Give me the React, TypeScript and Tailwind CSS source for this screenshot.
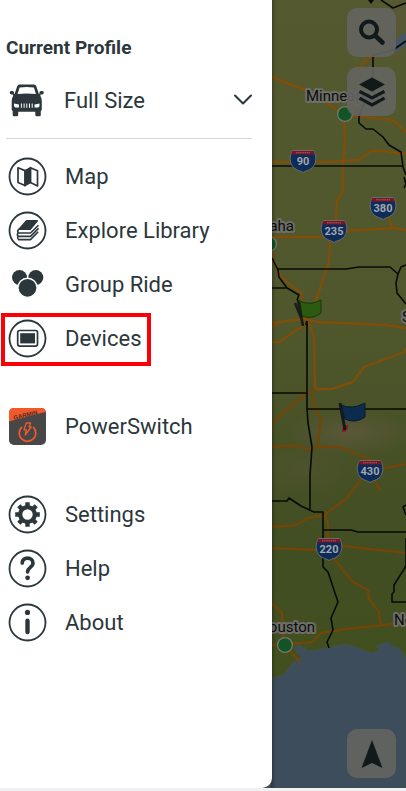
import { ReactNode } from 'react';

type Point = { x: number; y: number };

// Roads and state borders of the map, in map units
const roads = [
  'M272 76 276 79 306 90 344 114 353 116 393 120 406 132',
  'M272 162H328L359 160 371 151H384L401 154 406 153',
  'M344 114 345 143 343 160V191L337 200 336 222 330 242 329 262 316 300 308 322',
  'M344 114 355 100 356 77 363 62 373 56',
  'M388 212 389 217 392 228',
  'M272 237H321L346 231 393 228 406 230',
  'M277 240 272 246 273 260 281 277 301 293 303 310 307 322',
  'M272 323 303 319 319 322 386 325 406 328',
  'M272 328 276 323M272 342H279L306 324',
  'M309 323 314 337 315 389H332L353 382 364 367 404 352 406 348',
];

const southRoads = [
  'M272 423 306 393 315 389M312 393 314 407 321 418 318 445',
  'M272 447 296 445 306 449 318 447H339L370 459V471L406 464',
  'M374 478 376 484 381 490M364 476 346 499 324 515 308 518 296 525 272 527',
  'M324 515 328 523V545M272 548 316 550 343 546 406 553',
  'M332 556 343 570 353 582 368 590 369 599 379 612 381 626',
  'M272 603 282 613V628L285 645 300 662',
  'M272 645 313 642 321 633 346 629 393 624',
];

const borders = [
  'M381 0 393 8 406 3M406 41 393 50 373 55V80L359 117V123L366 129H373L383 137 389 145 401 152 403 167 406 175',
  'M272 166H403M404 177 406 184 404 188',
  'M278 269H346L359 267H390L398 274 396 283 397 293 406 304M398 274 401 267 406 265',
  'M272 258 278 270 279 277 287 288 299 295 297 300M272 288H287',
  'M307 323V409L308 423 312 447 310 475V509',
  'M272 393H307M307 409H406',
  'M272 501H287L289 498 301 506 314 512H323V567L328 572 338 602 331 618 333 630 327 642 329 648',
  'M323 530H351L358 532H406M406 505 403 507 406 515M406 538V566L394 585V592L392 594V602H406',
];

const cities = [
  { name: 'Minneapolis', x: 306, y: 101, anchor: 'start' },
  { name: 'Omaha', x: 294, y: 231, anchor: 'end' },
  { name: 'Houston', x: 315, y: 632, anchor: 'end' },
  { name: 'New Orleans', x: 394, y: 625, anchor: 'start' },
  { name: 'St. Louis', x: 402, y: 322, anchor: 'start' },
] as const;

const cityDots = [
  { x: 345, y: 114 },
  { x: 269, y: 244 },
  { x: 285, y: 645 },
];

const interstates = [
  { label: '90', x: 303, y: 161 },
  { label: '380', x: 383, y: 208 },
  { label: '235', x: 334, y: 231 },
  { label: '430', x: 370, y: 471 },
  { label: '220', x: 329, y: 549 },
];

const Shield = ({ label, x, y }: Point & { label: string }) => (
  <g transform={`translate(${x} ${y})`}>
    <path d="M-10.5-10.5H10.5C14-5 13.5 3 9 7 6 9.5 3 9.5 0 11.5-3 9.5-6 9.5-9 7-13.5 3-14-5-10.5-10.5Z" fill="#0d2c5a" stroke="#6a6c6c" strokeWidth="1" />
    <path d="M-10.3-10H10.3L11.8-6.5H-11.8Z" fill="#7c1422" />
    <path d="M-7-8.2H7" stroke="#a5616a" strokeDasharray="1.5 .6" />
    <text y="4" textAnchor="middle" fill="#a2a8ad" className="font-['Roboto',sans-serif] text-[11px] font-bold">
      {label}
    </text>
  </g>
);

const MapCanvas = () => (
  <svg className="absolute inset-0 h-full w-full" viewBox="0 0 406 788" preserveAspectRatio="xMaxYMin slice" role="img" aria-label="Map">
    <defs>
      <linearGradient id="land" x1="0" y1="0" x2="0" y2="1">
        <stop offset="0" stopColor="#54592f" />
        <stop offset=".4" stopColor="#50572d" />
        <stop offset=".6" stopColor="#455025" />
        <stop offset=".72" stopColor="#414e22" />
        <stop offset=".85" stopColor="#42501f" />
      </linearGradient>
      <radialGradient id="hills">
        <stop offset="0" stopColor="#5b573a" />
        <stop offset="1" stopColor="#5b573a" stopOpacity="0" />
      </radialGradient>
      <linearGradient id="edge" x1="0" x2="1">
        <stop offset="0" stopColor="#000" stopOpacity=".3" />
        <stop offset="1" stopColor="#000" stopOpacity="0" />
      </linearGradient>
    </defs>
    <rect width="406" height="788" fill="url(#land)" />
    <ellipse cx="350" cy="433" rx="62" ry="24" fill="url(#hills)" />
    <ellipse cx="305" cy="470" rx="50" ry="26" fill="url(#hills)" opacity=".4" />
    <ellipse cx="400" cy="20" rx="30" ry="40" fill="url(#hills)" opacity=".7" />

    {/* Water */}
    <path d="M406 32 397 40 388 49 373 57 396 52 406 45Z" fill="#46566a" />
    <path
      d="M0 678H272L283 675 290 666 296 660 302 656 297 654 295 648 299 644 303 648 306 647 305 651 316 650 329 647 346 644 356 647 371 653 380 650 376 646 384 643 389 642 392 646 399 648 403 653 406 658V788H0Z"
      fill="#3e4d5b"
      stroke="#40543f"
      strokeWidth=".8"
    />

    <g fill="none" strokeWidth="2.4" strokeLinejoin="round">
      {roads.map((d) => (
        <path key={d} d={d} stroke="#7f4e09" />
      ))}
      {southRoads.map((d) => (
        <path key={d} d={d} stroke="#724508" />
      ))}
    </g>
    <g fill="none" stroke="#080a06" strokeWidth="1.6" strokeLinejoin="round">
      {borders.map((d) => (
        <path key={d} d={d} />
      ))}
    </g>
    <path d="M368 0H374L371 4Z" fill="#080a06" />

    {cities.map(({ name, x, y, anchor }) => (
      <text
        key={name}
        x={x}
        y={y}
        textAnchor={anchor}
        fill="#0c0d0c"
        stroke="#6d6e68"
        strokeWidth="4"
        strokeLinejoin="round"
        paintOrder="stroke"
        className="font-['Roboto',sans-serif] text-[15px]"
      >
        {name}
      </text>
    ))}
    {cityDots.map(({ x, y }) => (
      <circle key={y} cx={x} cy={y} r="7.4" fill="#135426" stroke="#74776e" strokeWidth="1.3" />
    ))}
    {interstates.map((road) => (
      <Shield key={road.label} {...road} />
    ))}

    {/* Waypoint flags */}
    <path d="M300 301Q309 306 321 300V313Q312 320 302 316Z" fill="#2b5a10" stroke="#193807" strokeWidth="1" />
    <path d="M298 300 303 326M295 303 302 320" stroke="#191c1a" strokeWidth="2.6" />
    <path d="M307 321 306 325" stroke="#080a06" strokeWidth="2" />
    <path d="M341 405Q352 410 365 403V417Q355 424 345 419Z" fill="#0c2b4d" stroke="#071b31" strokeWidth="1" />
    <path d="M342 430H346M345 427 348 427" stroke="#8d1521" strokeWidth="3.5" />
    <path d="M340 403 345 430" stroke="#14191c" strokeWidth="3" />
    <rect x="271" width="5" height="788" fill="url(#edge)" />
  </svg>
);

const MapButton = ({ label, children }: { label: string; children: ReactNode }) => (
  <button type="button" aria-label={label} className="flex h-[49px] w-[49px] items-center justify-center rounded-[10px] bg-[#646561]/90 text-[#11191b]">
    {children}
  </button>
);

// Menu glyphs share a 39 unit box, most of them with a ring around
const Glyph = ({ ring = true, children }: { ring?: boolean; children: ReactNode }) => (
  <svg className="h-[39px] w-[39px] shrink-0" viewBox="0 0 39 39" fill="none" stroke="currentColor" aria-hidden="true">
    {ring && <circle cx="19.5" cy="19.5" r="18" strokeWidth="1.8" />}
    {children}
  </svg>
);

const CarIcon = () => (
  <Glyph ring={false}>
    <path
      fill="currentColor"
      stroke="none"
      fillRule="evenodd"
      d="M12.5 3.6H27Q28.7 3.6 29.3 5.3L31.9 13H32.4V11.7Q32.6 10 34 10H35.3Q36.8 10 36.8 11.6 36.8 13.4 35.3 13.4H33.4V15Q34.8 17 34.8 20V28.8L33.8 30V34Q33.8 35.3 32.6 35.3H29.6Q28.3 35.3 28.3 34V30.7H11.2V34Q11.2 35.3 9.9 35.3H7Q5.7 35.3 5.7 34V30L4.7 28.8V20Q4.7 17 6.1 15V13.4H4.2Q2.7 13.4 2.7 11.6 2.7 10 4.2 10H5.5Q6.9 10 7.1 11.7V13H7.6L10.2 5.3Q10.8 3.6 12.5 3.6ZM12.6 6.4 10.6 13Q19.5 11.9 28.9 13L26.9 6.4Q19.5 5.8 12.6 6.4Z"
    />
    <path d="M7 22.5 12 23.6V26.4H8.3Q7 26 7 24.8ZM32.5 22.5 27.5 23.6V26.4H31.2Q32.5 26 32.5 24.8Z" fill="white" stroke="none" />
    <path d="M14.4 22.5V26.8M17.1 22.5V26.8M19.8 22.5V26.8M22.5 22.5V26.8M25.2 22.5V26.8" stroke="white" strokeWidth="1" />
  </Glyph>
);

const MapIcon = () => (
  <Glyph>
    <path d="M10 10.8 17 13.6V28.6L10 25.4ZM22.5 10.8 29.5 13.8V29L22.5 25.6Z" strokeWidth="1.7" strokeLinejoin="round" />
    <path d="M17 13.6 22.5 10.5V25.6L17 28.8Z" fill="currentColor" strokeWidth="1.2" />
  </Glyph>
);

const LibraryIcon = () => (
  <Glyph>
    <path d="M18.5 9.8H29.3L22.3 18.2H11Z" fill="currentColor" strokeWidth="1.4" strokeLinejoin="round" />
    <path d="M11 18.2Q8.8 20 10.3 22H22.5L30.5 14.2" strokeWidth="1.6" strokeLinejoin="round" />
    <path d="M10 22Q8.6 24 10.3 25.4H22.5L30.5 17.4" strokeWidth="1.6" strokeLinejoin="round" />
    <path d="M9.8 25.4Q9 27.4 10.6 28.6H22.5L30.2 20.8" strokeWidth="1.6" strokeLinejoin="round" />
  </Glyph>
);

const GroupIcon = () => (
  <Glyph ring={false}>
    <g fill="currentColor" stroke="none">
      <circle cx="11.5" cy="12.5" r="7.5" />
      <circle cx="27.8" cy="12.5" r="7.5" />
    </g>
    <circle cx="19.5" cy="22.8" r="9.6" fill="currentColor" stroke="white" strokeWidth="1.4" />
  </Glyph>
);

const DevicesIcon = () => (
  <Glyph>
    <rect x="9.7" y="11.5" width="19.8" height="15.6" rx="2" strokeWidth="1.7" />
    <rect x="12.2" y="14.2" width="14.8" height="10.2" fill="currentColor" stroke="none" />
  </Glyph>
);

const PowerSwitchIcon = () => (
  <Glyph ring={false}>
    <rect x="1" y="1" width="37" height="37" rx="5" fill="#474747" stroke="none" />
    <path d="M1 14.5V6Q1 1 6 1H33Q38 1 38 6V4.8Z" fill="#f1592a" stroke="none" />
    <text x="6" y="13" transform="rotate(-14 6 13)" fill="#4a3029" stroke="none" className="font-['Liberation_Sans',sans-serif] text-[6px] font-bold">
      GARMIN
    </text>
    <path d="M13.5 20.3A8.3 8.3 0 1 0 25.5 20.3" stroke="#f1592a" strokeWidth="1.7" strokeLinecap="round" />
    <path d="M18.3 16H22.6L21.2 20H23.2L17.2 28 18.4 22.8H16Z" stroke="#f1592a" strokeWidth="1.3" strokeLinejoin="round" />
  </Glyph>
);

const SettingsIcon = () => (
  <Glyph>
    {[0, 45, 90, 135].map((angle) => (
      <path key={angle} d="M19.5 7.2V13M19.5 26V31.8" strokeWidth="4.4" transform={`rotate(${angle} 19.5 19.5)`} />
    ))}
    <circle cx="19.5" cy="19.5" r="7.3" strokeWidth="4.2" />
  </Glyph>
);

const HelpIcon = () => (
  <Glyph>
    <path d="M14.2 14C14.2 7.4 25 7.6 25 14.2 25 18.5 19.6 18.3 19.6 22.8" strokeWidth="3.7" strokeLinecap="round" />
    <circle cx="19.6" cy="28.8" r="2.4" fill="currentColor" stroke="none" />
  </Glyph>
);

const AboutIcon = () => (
  <Glyph>
    <circle cx="19.5" cy="9.4" r="2.6" fill="currentColor" stroke="none" />
    <path d="M19.5 17.8V29" strokeWidth="4.4" strokeLinecap="round" />
  </Glyph>
);

const menuGroups = [
  [
    { label: 'Map', icon: <MapIcon /> },
    { label: 'Explore Library', icon: <LibraryIcon /> },
    { label: 'Group Ride', icon: <GroupIcon /> },
    { label: 'Devices', icon: <DevicesIcon />, highlighted: true },
  ],
  [{ label: 'PowerSwitch', icon: <PowerSwitchIcon /> }],
  [
    { label: 'Settings', icon: <SettingsIcon /> },
    { label: 'Help', icon: <HelpIcon /> },
    { label: 'About', icon: <AboutIcon /> },
  ],
];

const Drawer = () => (
  <aside className="relative w-[67%] rounded-br-[10px] bg-white pt-9 text-[#2b373b]">
    <h2 className="px-[6px] text-[19px] leading-6 font-bold">Current Profile</h2>

    {/* Profile picker */}
    <div className="mr-5 ml-[6px] border-b border-[#d6d8d8] pt-[13px] pb-[11px]">
      <button type="button" aria-haspopup="listbox" className="flex h-[54px] w-full items-center gap-[18px] pl-px text-left text-[22px]">
        <CarIcon />
        <span className="flex-1">Full Size</span>
        <svg className="h-[18px] w-[18px]" viewBox="0 0 18 18" fill="none" stroke="currentColor" strokeWidth="2" strokeLinecap="round" strokeLinejoin="round" aria-hidden="true">
          <path d="M1 4.5 9 12.5 17 4.5" />
        </svg>
      </button>
    </div>

    <nav className="flex flex-col gap-[34px] pt-[10px] pb-6">
      {menuGroups.map((group) => (
        <ul key={group[0].label}>
          {group.map(({ label, icon, highlighted }) => (
            <li key={label} className="relative">
              <button type="button" className="flex h-[54px] w-full items-center gap-[18px] px-2 text-left text-[22px]">
                {icon}
                <span>{label}</span>
              </button>
              {highlighted && <span className="pointer-events-none absolute top-[2px] left-px h-[53px] w-[150px] border-4 border-[#fb0007]" />}
            </li>
          ))}
        </ul>
      ))}
    </nav>
  </aside>
);

export default function App() {
  return (
    <div className="flex min-h-screen flex-col bg-[#f1f1f3] pb-[3px] font-['Roboto',sans-serif]">
      <main className="relative flex flex-1 justify-between overflow-hidden">
        <MapCanvas />
        <Drawer />
        <div className="relative flex flex-col gap-[10px] px-[10px] pt-2 pb-[10px]">
          <MapButton label="Search">
            <svg className="h-[30px] w-[30px]" viewBox="0 0 30 30" fill="none" stroke="currentColor" aria-hidden="true">
              <circle cx="12" cy="11.5" r="8" strokeWidth="4" />
              <path d="M18 17.5 25.5 24.5" strokeWidth="4.6" strokeLinecap="round" />
            </svg>
          </MapButton>
          <MapButton label="Map layers">
            <svg className="h-[30px] w-[30px]" viewBox="0 0 30 30" fill="none" stroke="currentColor" aria-hidden="true">
              <path d="M15 .5 28 7.5 15 14.5 2 7.5Z" fill="currentColor" stroke="none" />
              <path d="M2.5 14.3 15 21 27.5 14.3M2.5 21.2 15 28 27.5 21.2" strokeWidth="3.2" />
            </svg>
          </MapButton>
          <div className="mt-auto">
            <MapButton label="Track my position">
              <svg className="h-[30px] w-[30px]" viewBox="0 0 30 30" fill="currentColor" aria-hidden="true">
                <path d="M15 1 25.5 29 15 24 4.5 29Z" />
              </svg>
            </MapButton>
          </div>
        </div>
      </main>
    </div>
  );
}
